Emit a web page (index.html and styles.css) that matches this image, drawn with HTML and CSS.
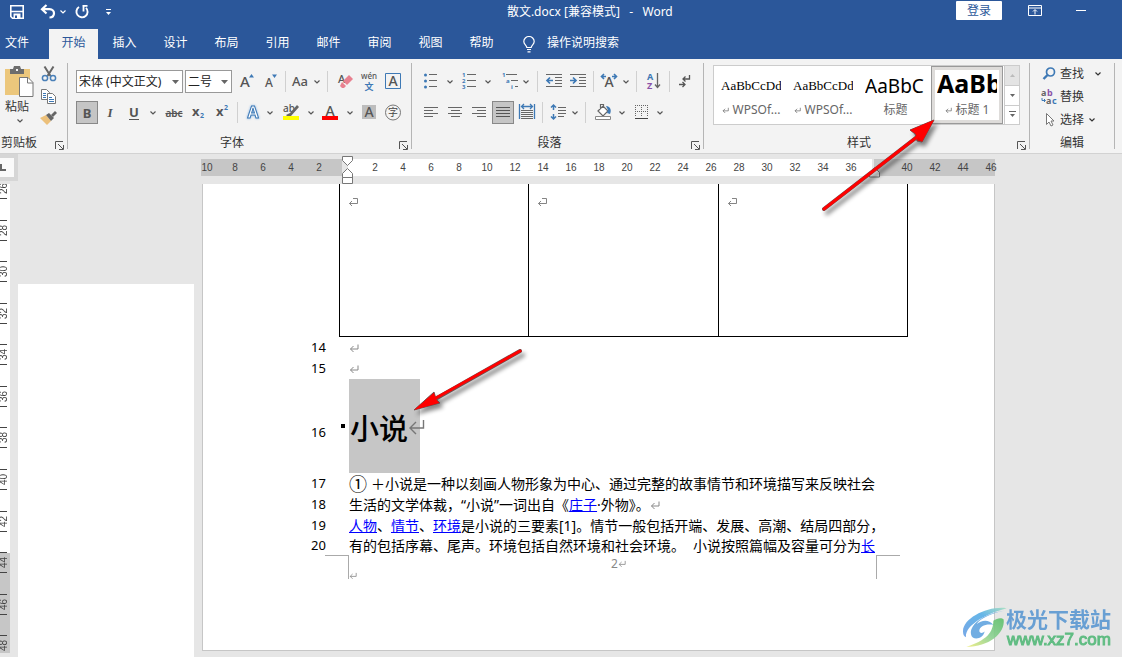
FILE: index.html
```html
<!DOCTYPE html>
<html lang="zh-CN">
<head>
<meta charset="utf-8">
<title>散文.docx [兼容模式] - Word</title>
<link rel="stylesheet" href="styles.css">
</head>
<body>
<svg class="defs" aria-hidden="true">
  <symbol id="caret" viewBox="0 0 8 6"><path d="M1.5 1.5 4 4 6.5 1.5" fill="none" stroke="currentColor" stroke-width="1.2"/></symbol>
  <symbol id="launch" viewBox="0 0 9 9"><path d="M.5 8V.5H8M3 3l5 5M8.500 4v4.500H4" fill="none" stroke="#555"/></symbol>
  <symbol id="tri" viewBox="0 0 7 4"><path d="M0 0h7L3.500 4z" fill="currentColor"/></symbol>
  <symbol id="ret" viewBox="0 0 10 9"><path d="M9 .5V5H1.500M4.500 2 1.500 5l3 3" fill="none" stroke="currentColor"/></symbol>
  <symbol id="cellret" viewBox="0 0 10 10"><path d="M5 1.500h4.500v5H1.500M4 4 1.500 6.500 4 9" fill="none" stroke="currentColor" stroke-width=".9"/></symbol>
</svg>
<div class="app">
  <header class="titlebar">
    <div class="quick">
      <button aria-label="保存"><svg width="16" height="16" viewBox="0 0 16 16"><path d="M1.800 1.800h12.400v12.400H3.500l-1.700-1.700z" fill="none" stroke="#fff" stroke-width="1.600"/><path d="M2 7.500h12" stroke="#fff" stroke-width="1.500"/><path d="M4.500 9.500h7V15h-7z" fill="#fff"/><path d="M6 11.500h2V14H6z" fill="#2b579a"/></svg></button>
      <button aria-label="撤消"><svg width="16" height="16" viewBox="0 0 16 16"><path d="M6.500 1 2 5.200 6.500 9.500M2.500 5.200h7c6 0 6 8 0 8.300" fill="none" stroke="#fff" stroke-width="2.200"/></svg></button>
      <button aria-label="撤消列表"><svg width="8" height="6"><use href="#caret"/></svg></button>
      <button aria-label="重复"><svg width="16" height="16" viewBox="0 0 16 16"><path d="M5 3A5.600 5.600 0 1 0 12 3.800" fill="none" stroke="#fff" stroke-width="1.900"/><path d="M8.500 1.800h5M9.500 1.500v6" fill="none" stroke="#fff" stroke-width="1.800"/></svg></button>
      <button aria-label="自定义快速访问工具栏"><svg width="7" height="8" viewBox="0 0 7 8"><path d="M1 1.500h5" stroke="#fff"/><path d="M1 4h5L3.500 7z" fill="#fff"/></svg></button>
    </div>
    <div class="doc-title">散文.docx [兼容模式]&nbsp;&nbsp; -&nbsp;&nbsp; Word</div>
    <div class="window-tools">
      <button class="login">登录</button>
      <button aria-label="功能区显示选项"><svg width="14" height="12" viewBox="0 0 14 12"><path d="M.5.500h13v10H.5zM.5 3h13M7 9.500V5M5 6.500l2-2 2 2" fill="none" stroke="#fff"/></svg></button>
      <button aria-label="最小化"><svg width="11" height="11" viewBox="0 0 11 11"><path d="M0 5.500h10" stroke="#fff"/></svg></button>
    </div>
  </header>
  <nav class="tabs">
    <button class="tab file">文件</button>
    <button class="tab active">开始</button>
    <button class="tab">插入</button>
    <button class="tab">设计</button>
    <button class="tab">布局</button>
    <button class="tab">引用</button>
    <button class="tab">邮件</button>
    <button class="tab">审阅</button>
    <button class="tab">视图</button>
    <button class="tab">帮助</button>
    <button class="tell"><svg width="12" height="17" viewBox="0 0 12 17"><path d="M3.800 11.500C3.800 9.500.8 8.500.8 5.500a5.100 4.900 0 0 1 10.400 0c0 3-3 4-3 6zM4 13.500h4M4.500 15.800h3" fill="none" stroke="#fff" stroke-width="1.200"/></svg>操作说明搜索</button>
  </nav>

  <section class="ribbon">
    <div class="group clipboard">
      <div class="clip-body">
        <button class="paste">
          <svg width="29" height="31" viewBox="0 0 29 31"><path d="M0 3h25v26H0z" fill="#ecc77c"/><path d="M5 3h3l1-3h6l1 3h3v5H5z" fill="#6d6d6d"/><path d="M11 3h2v2h-2z" fill="#f3f3f3"/><path d="M14.500 11.500h8.500l5 5v14H14.500z" fill="#fff" stroke="#777"/><path d="M22.500 11.500V17H28" fill="none" stroke="#777"/></svg>
          <span>粘贴</span>
          <svg width="8" height="6"><use href="#caret"/></svg>
        </button>
        <div class="clip-tools">
          <button aria-label="剪切"><svg width="16" height="16" viewBox="0 0 16 16"><path d="M3.500.5 9.500 10M12.500.500 6.500 10" stroke="#666" stroke-width="2"/><g fill="none" stroke="#4a80b8" stroke-width="1.500"><circle cx="4" cy="12" r="2.600"/><circle cx="12" cy="12" r="2.600"/></g></svg></button>
          <button aria-label="复制"><svg width="16" height="15" viewBox="0 0 16 15"><g fill="#fff" stroke="#777"><path d="M.5.500h5l3 3v7h-8z"/><path d="M6.500 4.500h5l3 3v7h-8z"/></g><path d="M2 4.500h3M2 6.500h3M2 8.500h3M8 8.500h3M8 10.500h5M8 12.500h5" stroke="#3e79b5"/></svg></button>
          <button aria-label="格式刷"><svg width="17" height="14" viewBox="0 0 17 14"><path d="M0 7 6 4l5 6-4 4z" fill="#ecc07a"/><path d="m6 4 3-2 5 5-3 3z" fill="#666"/><path d="m11 4 4-4 2 2-4 4z" fill="#666"/></svg></button>
        </div>
      </div>
      <div class="caption"><span>剪贴板</span><button aria-label="剪贴板设置"><svg width="9" height="9"><use href="#launch"/></svg></button></div>
    </div>

    <div class="group font">
      <div class="row font-one">
        <label class="combo"><select aria-label="字体"><option>宋体 (中文正文)</option></select><svg width="7" height="4"><use href="#tri"/></svg></label>
        <label class="combo"><select aria-label="字号"><option>二号</option></select><svg width="7" height="4"><use href="#tri"/></svg></label>
        <button aria-label="增大字号"><svg width="24" height="23" viewBox="0 0 24 23"><text x="6" y="17" class="g" font-size="15">A</text><path d="M15 7.500 17.500 4 20 7.500z" fill="#3e79b5"/></svg></button>
        <button aria-label="减小字号"><svg width="24" height="23" viewBox="0 0 24 23"><text x="7" y="17" class="g" font-size="12">A</text><path d="M14 4.500h5L16.500 8z" fill="#3e79b5"/></svg></button>
        <i class="sep"></i>
        <button aria-label="更改大小写"><svg width="24" height="23" viewBox="0 0 24 23"><text x="4" y="16" class="g" font-size="13">Aa</text></svg></button>
        <button aria-label="大小写选项"><svg width="8" height="6"><use href="#caret"/></svg></button>
        <i class="sep"></i>
        <button aria-label="清除格式"><svg width="24" height="23" viewBox="0 0 24 23"><text x="5" y="13" class="g" font-size="11">A</text><path d="m10 11 6-6 4 4-6 6z" fill="#e8808f"/><path d="m9 12 4 4-2 2H9l-2-2z" fill="#e8808f"/></svg></button>
        <button aria-label="拼音指南"><svg width="24" height="23" viewBox="0 0 24 23"><text x="12" y="9" text-anchor="middle" font-size="8" class="g">wén</text><text x="12" y="20" text-anchor="middle" font-size="9" class="b">文</text></svg></button>
        <button aria-label="字符边框"><svg width="24" height="23" viewBox="0 0 24 23"><path d="M4.500 3.500h15v15h-15z" fill="none" stroke="#3e79b5"/><text x="12" y="16" text-anchor="middle" font-size="14" class="g">A</text></svg></button>
      </div>
      <div class="row font-two">
        <button class="on" aria-label="加粗"><b>B</b></button>
        <button aria-label="倾斜"><b class="ital">I</b></button>
        <button aria-label="下划线"><b class="under">U</b></button>
        <button aria-label="下划线样式"><svg width="8" height="6"><use href="#caret"/></svg></button>
        <button aria-label="删除线"><s>abc</s></button>
        <button aria-label="下标"><svg width="22" height="23" viewBox="0 0 22 23"><text x="4" y="15" class="g h" font-size="13">x</text><text x="12" y="17" class="b" font-size="7">2</text></svg></button>
        <button aria-label="上标"><svg width="24" height="23" viewBox="0 0 24 23"><text x="6" y="15" class="g h" font-size="13">x</text><text x="14" y="9" class="b" font-size="7">2</text></svg></button>
        <i class="sep"></i>
        <button aria-label="文本效果"><svg width="24" height="23" viewBox="0 0 24 23"><text x="12" y="17" text-anchor="middle" font-size="16" font-weight="700" fill="#fff" stroke="#3e79b5" class="glow">A</text></svg></button>
        <button aria-label="效果选项"><svg width="8" height="6"><use href="#caret"/></svg></button>
        <button aria-label="突出显示"><svg width="28" height="23" viewBox="0 0 28 23"><text x="8" y="11" class="g" font-size="10">ab</text><path d="m22 4-7 8-4 2 1 1h4l8-9z" fill="#666"/><path d="M8 15h16v4H8z" fill="#ff0"/></svg></button>
        <button aria-label="突出显示颜色"><svg width="8" height="6"><use href="#caret"/></svg></button>
        <button aria-label="字体颜色"><svg width="24" height="23" viewBox="0 0 24 23"><text x="12" y="15" text-anchor="middle" class="g" font-size="14">A</text><path d="M4 15h16v4H4z" fill="red"/></svg></button>
        <button aria-label="颜色选项"><svg width="8" height="6"><use href="#caret"/></svg></button>
        <button aria-label="字符底纹"><svg width="24" height="23" viewBox="0 0 24 23"><path d="M5 4h14v14H5z" fill="#bdbdbd"/><text x="12" y="16" text-anchor="middle" class="g" font-size="14">A</text></svg></button>
        <button aria-label="带圈字符"><svg width="24" height="23" viewBox="0 0 24 23"><circle cx="12" cy="11.500" r="7.500" fill="none" stroke="#777"/><text x="12" y="15" text-anchor="middle" font-size="10" fill="#444">字</text></svg></button>
      </div>
      <div class="caption"><span>字体</span><button aria-label="字体设置"><svg width="9" height="9"><use href="#launch"/></svg></button></div>
    </div>

    <div class="group para">
      <div class="row para-one">
        <button aria-label="项目符号"><svg width="24" height="23" viewBox="0 0 24 23"><g fill="#3e79b5"><circle cx="6.500" cy="5" r="1.500"/><circle cx="6.500" cy="11" r="1.500"/><circle cx="6.500" cy="17" r="1.500"/></g><path d="M10 4.500h8M10 10.500h8M10 16.500h8" stroke="#666"/></svg></button>
        <button aria-label="符号选项"><svg width="8" height="6"><use href="#caret"/></svg></button>
        <button aria-label="编号"><svg width="24" height="23" viewBox="0 0 24 23"><g class="b" font-size="6"><text x="5" y="7">1</text><text x="5" y="13">2</text><text x="5" y="19">3</text></g><path d="M10 4.500h9M10 10.500h9M10 16.500h9" stroke="#666"/></svg></button>
        <button aria-label="编号选项"><svg width="8" height="6"><use href="#caret"/></svg></button>
        <button aria-label="多级列表"><svg width="24" height="23" viewBox="0 0 24 23"><g class="b" font-size="6"><text x="6" y="7">1</text><text x="10" y="13">a</text><text x="15" y="19">i</text></g><path d="M10 4.500h11M15 10.500h7M19 16.500h3" stroke="#666"/></svg></button>
        <button aria-label="列表选项"><svg width="8" height="6"><use href="#caret"/></svg></button>
        <i class="sep"></i>
        <button aria-label="减少缩进"><svg width="24" height="23" viewBox="0 0 24 23"><path d="M4 4.500h16M13 7.500h7M13 10.500h7M13 13.500h7M4 16.500h16" stroke="#666"/><path d="M11 10.500H5M8 7.500l-3 3 3 3" fill="none" stroke="#3e79b5" stroke-width="1.700"/></svg></button>
        <button aria-label="增加缩进"><svg width="24" height="23" viewBox="0 0 24 23"><path d="M4 4.500h16M13 7.500h7M13 10.500h7M13 13.500h7M4 16.500h16" stroke="#666"/><path d="M4 10.500h6M7 7.500l3 3-3 3" fill="none" stroke="#3e79b5" stroke-width="1.700"/></svg></button>
        <i class="sep"></i>
        <button aria-label="中文版式"><svg width="24" height="23" viewBox="0 0 24 23"><text x="12" y="17" text-anchor="middle" class="g" font-size="14">A</text><path d="M9 6.500H5M7 4 4.500 6.500 7 9M15 6.500h4M17 4l2.500 2.500L17 9" fill="none" stroke="#3e79b5" stroke-width="1.600"/></svg></button>
        <button aria-label="版式选项"><svg width="8" height="6"><use href="#caret"/></svg></button>
        <i class="sep"></i>
        <button aria-label="排序"><svg width="24" height="23" viewBox="0 0 24 23"><text x="5" y="10" class="b" font-size="9">A</text><text x="5" y="19" font-size="9" font-weight="700" fill="#8a52a8">Z</text><path d="M15.500 3v14M13 14.500l2.500 3 2.500-3" fill="none" stroke="#666" stroke-width="1.300"/></svg></button>
        <i class="sep"></i>
        <button aria-label="显示编辑标记"><svg width="24" height="23" viewBox="0 0 24 23"><path d="M16.500 5v4H10M12.500 6.500 10 9l2.500 2.500M6 14.500h6M9.500 12l2.500 2.500L9.500 17" fill="none" stroke="#555" stroke-width="1.300"/></svg></button>
      </div>
      <div class="row para-two">
        <button aria-label="左对齐"><svg width="24" height="23" viewBox="0 0 24 23"><path d="M5 6.500h14M5 9.500h9M5 12.500h14M5 15.500h9" stroke="#666"/></svg></button>
        <button aria-label="居中"><svg width="24" height="23" viewBox="0 0 24 23"><path d="M5 6.500h14M8 9.500h9M5 12.500h14M8 15.500h9" stroke="#666"/></svg></button>
        <button aria-label="右对齐"><svg width="24" height="23" viewBox="0 0 24 23"><path d="M5 6.500h14M10 9.500h9M5 12.500h14M10 15.500h9" stroke="#666"/></svg></button>
        <button class="on" aria-label="两端对齐"><svg width="20" height="21" viewBox="0 0 20 21"><path d="M3 5.500h14M3 8.500h14M3 11.500h14M3 14.500h14" stroke="#555"/></svg></button>
        <button aria-label="分散对齐"><svg width="24" height="23" viewBox="0 0 24 23"><path d="M4.500 3v15M19.500 3v15M7 5.500h10M9 3 6.500 5.500 9 8M15 3l2.500 2.500L15 8" fill="none" stroke="#3e79b5" stroke-width="1.300"/><path d="M6 9.500h12M6 11.500h12M6 13.500h12M6 15.500h12M6 17.500h12" stroke="#666"/></svg></button>
        <i class="sep"></i>
        <button aria-label="行距"><svg width="24" height="23" viewBox="0 0 24 23"><path d="M7.500 4v5M5 6.500 7.500 4 10 6.500M7.500 18v-5M5 15.500 7.500 18l2.500-2.500" fill="none" stroke="#3e79b5" stroke-width="1.500"/><path d="M12 6.500h8M12 9.500h8M12 12.500h8M12 15.500h6" stroke="#666"/></svg></button>
        <button aria-label="行距选项"><svg width="8" height="6"><use href="#caret"/></svg></button>
        <i class="sep"></i>
        <button aria-label="底纹"><svg width="24" height="23" viewBox="0 0 24 23"><path d="m7 10 5-5 5 5-5 5zM9.500 8V3.500h3V7" fill="#fff" stroke="#666" stroke-width="1.200"/><path d="M15 5c4 0 6 4 4 8l-3-1 1-3z" fill="#3e79b5"/><path d="M4.500 15.500h15v3h-15z" fill="#fff" stroke="#888"/></svg></button>
        <button aria-label="底纹选项"><svg width="8" height="6"><use href="#caret"/></svg></button>
        <button aria-label="边框"><svg width="24" height="23" viewBox="0 0 24 23"><path d="M6 4.500h13M6 10.500h13M6.500 4v12M12.500 4v12M18.500 4v12" stroke="#666" stroke-dasharray="1 1"/><path d="M6 17.500h13" stroke="#444"/></svg></button>
        <button aria-label="边框选项"><svg width="8" height="6"><use href="#caret"/></svg></button>
      </div>
      <div class="caption"><span>段落</span><button aria-label="段落设置"><svg width="9" height="9"><use href="#launch"/></svg></button></div>
    </div>

    <div class="group styles">
      <div class="gallery">
        <button class="style"><span class="sample">AaBbCcDd</span><span class="name"><svg width="7" height="7" viewBox="0 0 10 9"><use href="#ret"/></svg>WPSOf...</span></button>
        <button class="style"><span class="sample">AaBbCcDd</span><span class="name"><svg width="7" height="7" viewBox="0 0 10 9"><use href="#ret"/></svg>WPSOf...</span></button>
        <button class="style"><span class="sample title">AaBbC</span><span class="name">标题</span></button>
        <button class="style picked"><span class="sample heading">AaBb</span><span class="name"><svg width="7" height="7" viewBox="0 0 10 9"><use href="#ret"/></svg>标题 1</span></button>
        <div class="scroller">
          <button class="off" aria-label="向上"><svg class="up" width="5" height="3"><use href="#tri"/></svg></button>
          <button aria-label="向下"><svg width="5" height="3"><use href="#tri"/></svg></button>
          <button aria-label="其他"><svg width="7" height="7" viewBox="0 0 7 7"><path d="M0 .5h7" stroke="#666"/><path d="M1 3h5L3.500 6z" fill="#666"/></svg></button>
        </div>
      </div>
      <div class="caption"><span>样式</span><button aria-label="样式设置"><svg width="9" height="9"><use href="#launch"/></svg></button></div>
    </div>

    <div class="group edit">
      <div class="edit-body">
        <button><svg width="16" height="16" viewBox="0 0 16 16"><circle cx="9.500" cy="6" r="4" fill="none" stroke="#3e79b5" stroke-width="1.700"/><path d="m6.500 9-4 4" stroke="#3e79b5" stroke-width="2.400"/></svg>查找<svg class="more" width="8" height="6"><use href="#caret"/></svg></button>
        <button><svg width="16" height="18" viewBox="0 0 16 18"><g font-size="9" font-weight="700"><text x="0" y="8" fill="#666">a</text><text x="6" y="8" fill="#8a52a8">b</text><text x="5" y="16" fill="#666">a</text><text x="11" y="16" fill="#3e79b5">c</text></g><path d="M1 10v2.500h3M3 11l1.500 1.500L3 14" fill="none" stroke="#3e79b5"/></svg>替换</button>
        <button><svg width="16" height="16" viewBox="0 0 16 16"><path d="M5.500 1.500v11l2.500-2.500 2 4 2-1-2-4h3z" fill="#fff" stroke="#777"/></svg>选择<svg class="near" width="8" height="6"><use href="#caret"/></svg></button>
      </div>
      <div class="caption"><span>编辑</span></div>
    </div>
  </section>

  <main class="workspace">
    <aside class="rail">
      <div class="tabstop"><svg width="6" height="8" viewBox="0 0 6 8"><path d="M1 0v6h5" fill="none" stroke="#666" stroke-width="2"/></svg></div>
      <div class="vruler"><div class="vscale">
        <div><span>26</span></div><div><span>28</span></div><div><span>30</span></div><div><span>32</span></div><div><span>34</span></div><div><span>36</span></div><div><span>38</span></div><div><span>40</span></div><div><span>42</span></div><div><span>44</span></div><div><span>46</span></div><div><span>48</span></div>
      </div></div>
    </aside>
    <div class="prev-page"></div>
    <div class="sheet-col">
      <div class="hruler">
        <div class="hscale"><span>10</span><span>8</span><span>6</span><span>4</span><span>2</span><span></span><span>2</span><span>4</span><span>6</span><span>8</span><span>10</span><span>12</span><span>14</span><span>16</span><span>18</span><span>20</span><span>22</span><span>24</span><span>26</span><span>28</span><span>30</span><span>32</span><span>34</span><span>36</span><span></span><span>40</span><span>42</span><span>44</span><span>46</span></div>
        <svg class="indent-left" width="12" height="29" viewBox="0 0 12 29"><path d="M.5.500h10v4l-5 5-5-5zM.500 21.500v-4l5-5 5 5v10H.500zM.500 21.500h10" fill="#fff" stroke="#777"/></svg>
        <svg class="indent-right" width="12" height="11" viewBox="0 0 12 11"><path d="M.5 10V5.500l5-5 5 5V10z" fill="#f3f3f3" stroke="#777"/></svg>
      </div>
      <article class="sheet">
        <table class="doc-table"><tbody><tr>
          <td><svg width="10" height="10"><use href="#cellret"/></svg></td>
          <td><svg width="10" height="10"><use href="#cellret"/></svg></td>
          <td><svg width="10" height="10"><use href="#cellret"/></svg></td>
        </tr></tbody></table>
        <div class="line"><span class="num">14</span><p><svg class="mark" width="10" height="9"><use href="#ret"/></svg></p></div>
        <div class="line"><span class="num">15</span><p><svg class="mark" width="10" height="9"><use href="#ret"/></svg></p></div>
        <div class="line title-line"><span class="num">16</span><h1><span>小说</span><svg width="18" height="18" viewBox="0 0 18 18"><path d="M15.500 2v8H2M8 4l-6 6 6 6" fill="none" stroke="#777" stroke-width="1.400"/></svg></h1></div>
        <div class="line"><span class="num">17</span><p><span class="circled">①</span>＋小说是一种以刻画人物形象为中心、通过完整的故事情节和环境描写来反映社会</p></div>
        <div class="line"><span class="num">18</span><p>生活的文学体裁，<span class="latin">“</span>小说<span class="latin">”</span>一词出自《<a href="#zhuangzi">庄子</a><span class="latin">·</span>外物》。<svg class="mark" width="10" height="9"><use href="#ret"/></svg></p></div>
        <div class="line"><span class="num">19</span><p><a href="#people">人物</a>、<a href="#plot">情节</a>、<a href="#setting">环境</a>是小说的三要素<span class="latin">[1]</span>。情节一般包括开端、发展、高潮、结局四部分，</p></div>
        <div class="line last"><span class="num">20</span><p>有的包括序幕、尾声。环境包括自然环境和社会环境。<span class="gap"> </span>小说按照篇幅及容量可分为<a href="#long">长</a></p></div>
        <footer class="sheet-foot">
          <i class="corner left"></i>
          <svg class="foot-mark" width="8" height="8" viewBox="0 0 10 9"><use href="#ret"/></svg>
          <div class="page-no">2<svg width="8" height="8" viewBox="0 0 10 9"><use href="#ret"/></svg></div>
          <i class="corner right"></i>
        </footer>
      </article>
    </div>
  </main>

  <svg class="arrow to-style" width="126" height="106" viewBox="0 0 126 106"><path d="M5 95 98 23" stroke="#655" stroke-width="4" stroke-linecap="round"/><path d="m115 6-24 10 5 4 2 7 5 1z" fill="#e00" stroke="#655"/><path d="M5 95 98 23" stroke="#f00" stroke-width="3" stroke-linecap="round"/><path d="m115 6-24 10 6 4 6 8z" fill="#f00"/></svg>
  <svg class="arrow to-title" width="126" height="80" viewBox="0 0 126 80"><path d="M110 7 27 54" stroke="#655" stroke-width="4" stroke-linecap="round"/><path d="m4 66 20-18 2 7 4 4z" fill="#e00" stroke="#655"/><path d="M110 7 26 54" stroke="#f00" stroke-width="3" stroke-linecap="round"/><path d="m4 66 20-17 2 6 3 4z" fill="#f00"/></svg>

  <div class="watermark">
    <svg width="46" height="43" viewBox="0 0 138 128">
      <defs>
        <linearGradient id="sky" x1="0" y1="1" x2="1" y2="0"><stop offset="0" stop-color="#6a9fe4"/><stop offset=".6" stop-color="#55aee6"/><stop offset="1" stop-color="#a5e0c0"/></linearGradient>
        <linearGradient id="leaf" x1="0" y1="1" x2="1" y2="0"><stop offset="0" stop-color="#f0ee80"/><stop offset=".5" stop-color="#8ad090"/><stop offset="1" stop-color="#5bbf6a"/></linearGradient>
      </defs>
      <path d="M134 6C80-2 3 35 3 75c0 9 2 14 9 18C8 60 66 24 134 6z" fill="url(#sky)"/>
      <path d="M94 44c12-10 26-10 31-4 5 42-45 82-112 82 26-8 50-20 64-34 12-12 17-28 17-44z" fill="url(#leaf)"/>
      <path d="M126 14C74 20 22 52 27 84c3 20 36 16 41-8-6 6-16 6-16-2 0-14 20-22 42-18C80 38 58 42 44 54c10-16 42-32 82-40z" fill="#62a5df"/>
    </svg>
    <div><strong>极光下载站</strong><span>www.xz7.com</span></div>
  </div>
</div>
</body>
</html>
```
FILE: styles.css
```css
* { box-sizing: border-box; }
body {
  margin: 0;
  font: 12px/18px "Noto Sans", "Noto Sans CJK SC", sans-serif;
  color: #333;
  background: #e6e6e6;
}
button {
  display: flex; align-items: center; justify-content: center;
  margin: 0; padding: 0; border: 0;
  background: none; color: inherit; font: inherit; white-space: nowrap;
}
svg { display: block; flex: none; }
.defs { position: absolute; width: 0; height: 0; }
.app { position: relative; display: flex; flex-direction: column; height: 100vh; overflow: hidden; }

/* title bar */
.titlebar {
  display: grid; grid-template-columns: 45% auto 1fr; align-items: start;
  height: 29px; padding-top: 1px; background: #2b579a; color: #fff;
}
.quick { display: grid; grid-template-columns: 28px 20px 14px 30px 26px; padding-left: 3px; height: 21px; }
.quick button:nth-child(2) { margin: 0 -8px 0 6px; }
.quick button:nth-child(3) { margin: 0 -2px 0 8px; }
.quick button:nth-child(4) { margin-left: 4px; }
.doc-title { padding: 2px 0 0 2px; white-space: nowrap; }
.window-tools { display: flex; justify-content: flex-end; gap: 26px; padding-right: 35px; height: 19px; }
.window-tools button:nth-child(2) { margin-right: 8px; }
.login { width: 46px; height: 19px; border-radius: 1px; background: #fff; color: #2b579a; }

/* tabs */
.tabs { display: flex; height: 30px; background: #2b579a; color: #fff; }
.tab { width: 51px; height: 30px; padding-bottom: 2px; }
.file { width: 49px; padding-left: 5px; justify-content: flex-start; }
.active { width: 49px; margin-right: 1px; background: #f3f3f3; color: #2b579a; }
.tell { gap: 12px; margin-left: 16px; padding-bottom: 2px; }
.tell svg { margin-top: 2px; }

/* ribbon */
.ribbon { display: flex; height: 95px; padding: 4px 0; background: #f3f3f3; border-bottom: 1px solid #d2d2d2; color: #555; }
.group { display: flex; flex-direction: column; padding-top: 7px; border-right: 1px solid #b5b5b5; }
.row { display: grid; height: 23px; margin-bottom: 8px; }
.row button { height: 23px; }
.row button.on { border: 1px solid #888; background: #c5c5c5; width: 22px; justify-self: center; }
.sep { width: 1px; height: 21px; margin: auto; background: #d0d0d0; }
.g { fill: #555; font-weight: 500; }
.h { font-weight: 700; }
.b { fill: #3e79b5; font-weight: 700; }
.glow { filter: drop-shadow(0 0 1px #8ab8e8); }
.caption { display: flex; align-items: center; margin: auto 0 -3px; color: #333; }
.caption span { flex: 1; text-align: center; }
.caption button { width: 15px; height: 9px; margin-top: 4px; }

.clipboard { width: 68px; padding-top: 0; }
.clip-body { display: flex; gap: 6px; padding: 3px 0 0 5px; }
.paste { flex-direction: column; justify-content: flex-start; width: 29px; }
.paste span { align-self: flex-start; margin-top: 2px; line-height: 16px; color: #333; }
.paste svg:last-child { margin: 3px 0 0; }
.clip-tools { display: flex; flex-direction: column; gap: 7px; }
.clipboard .caption span { text-align: left; padding-left: 1px; }

.font { width: 344px; padding-left: 8px; }
.font-one { grid-template-columns: 107px 2px 47px 2px 24px 24px 6px 24px 10px 11px 24px 24px 24px; }
.font-one .combo:first-child { grid-column: 1; }
.font-one .combo:nth-child(2) { grid-column: 3; }
.font-one button:nth-child(3) { grid-column: 5; }
.combo { position: relative; display: block; height: 23px; }
.combo select {
  appearance: none; width: 100%; height: 23px; padding: 0 0 0 2px;
  border: 1px solid #999; border-radius: 0; background: #fff; color: #222; font: inherit;
}
.combo svg { position: absolute; right: 4px; top: 10px; color: #666; }
.font-two { grid-template-columns: 22px 24px 24px 14px 28px 22px 24px 7px 24px 10px 28px 15px 24px 15px 24px 24px; margin-bottom: 0; }
.font-two b { font-size: 13px; }
.ital { font-style: italic; font-family: "Liberation Serif", serif; }
.under { border-bottom: 1px solid #555; line-height: 13px; }
.font-two s { font-size: 10px; font-weight: 600; }
.font .caption, .para .caption { margin-left: -8px; }
.styles .caption { margin-left: -9px; }

.para { width: 292px; padding-left: 7px; }
.para-one { grid-template-columns: 24px 14px 24px 14px 25px 12px 10px 24px 24px 7px 24px 10px 11px 24px 7px 24px; }
.para-two { grid-template-columns: 24px 24px 24px 24px 24px 7px 24px 10px 11px 24px 14px 24px 14px; margin-bottom: 0; }

.styles { width: 326px; padding: 2px 0 0 9px; }
.gallery { display: grid; grid-template-columns: 72px 72px 73px 72px 1fr; width: 307px; height: 60px; border: 1px solid #ccc; background: #fff; }
.style { flex-direction: column; justify-content: flex-start; padding: 0 5px 0 7px; height: 58px; overflow: hidden; color: #666; }
.sample {
  display: flex; align-items: center; align-self: stretch; height: 36px; padding-top: 4px; overflow: hidden;
  color: #000; font: 13px/30px "Liberation Serif", serif;
}
.sample.title { font: 19px/30px "Noto Sans", sans-serif; }
.sample.heading { height: 32px; padding: 0; font: bold 25px/26px "Noto Sans", sans-serif; align-items: flex-start; }
.name { display: flex; align-items: center; gap: 4px; line-height: 16px; }
.picked { padding: 3px 5px 0; border: 1px solid #999; box-shadow: inset 0 0 0 3px #dedcda; }
.scroller { display: grid; grid-template-rows: 1fr 1fr 1fr; margin-left: 1px; border-left: 1px solid #ccc; color: #666; }
.scroller button + button { border-top: 1px solid #ccc; }
.scroller .off { background: #e4e4e4; color: #bbb; }
.up { rotate: 180deg; }

.edit { width: 85px; padding: 0; }
.edit-body { display: flex; flex-direction: column; align-items: flex-start; gap: 5px; padding: 2px 0 0 11px; color: #333; }
.edit-body button { height: 18px; gap: 3px; }
.more { margin-left: 7px; }
.near { margin-left: 1px; }

/* workspace */
.workspace { flex: 1; min-height: 0; display: grid; grid-template-columns: 18px minmax(0, 176px) minmax(0, 801px) 1fr; }
.rail { display: flex; flex-direction: column; min-height: 0; padding-bottom: 4px; }
.tabstop { display: flex; align-items: center; height: 27px; margin-bottom: 3px; border: 4px solid #d6d6d6; border-left: 0; background: #fafafa; }
.vruler {
  flex: 1; min-height: 0; width: 10px; overflow: hidden;
  background: linear-gradient(#fff 369px, #c6c6c6 369px);
}
.vscale { display: grid; grid-template-rows: repeat(12, 1fr); height: 499px; margin-top: -6px; }
.vscale div { min-height: 0; }
.vscale span {
  display: block; width: 7px; height: 21px; text-align: center;
  writing-mode: vertical-rl; rotate: 180deg; border: solid #444; border-width: 1px 0;
  font: 10px/7px "Liberation Sans", sans-serif; color: #444;
}
.prev-page { margin-top: 130px; background: #fff; }
.sheet-col { display: flex; flex-direction: column; padding-left: 7px; min-height: 0; }
.hruler {
  position: relative; height: 17px; margin: 5px 0 8px; overflow: visible;
  background: linear-gradient(90deg, #c6c6c6 141px, #e6e6e6 141px 147px, #fff 147px 671px, #e6e6e6 671px 673px, #c6c6c6 673px);
}
.hscale { display: grid; grid-template-columns: repeat(29, 28px); margin-left: -8px; text-align: center; font: 10px/17px "Liberation Sans", sans-serif; color: #444; }
.indent-left { position: absolute; left: 141px; top: -3px; }
.indent-right { position: absolute; left: 668px; top: 8px; }
.sheet { flex: 1; margin: 0 0 6px 1px; padding-left: 108px; background: #fff; border: solid #c6c6c6; border-width: 0 1px 1px; color: #000; }
.doc-table { width: 569px; height: 153px; margin-left: 28px; border-collapse: collapse; }
.doc-table td { width: 33%; padding: 13px 0 0 8px; vertical-align: top; border: 1px solid #000; border-top: 0; color: #777; }
.line { display: grid; grid-template-columns: 38px 1fr; align-items: center; min-height: 21px; }
.line p { margin: 0; font: 14px/21px "Noto Sans CJK SC", sans-serif; white-space: nowrap; }
.last { min-height: 19px; }
.line.last p { line-height: 19px; }
.num { font: 13px/19px "Noto Sans", sans-serif; }
.mark { display: inline-block; color: #888; }
.title-line { min-height: 94px; }
.title-line .num { padding-top: 12px; }
h1 { position: relative; display: flex; align-items: center; width: 71px; height: 94px; margin: 0; background: #c6c6c6; padding: 2px 0 0 1px; }
h1::before { content: ""; position: absolute; left: -8px; top: 45px; width: 4px; height: 4px; background: #000; }
h1 span { flex: none; font: 500 29px/40px "Noto Sans CJK SC", sans-serif; white-space: nowrap; }
.circled { display: inline-block; width: 22px; font-size: 18px; line-height: 20px; vertical-align: -2px; }
.latin { font-family: "Noto Sans", sans-serif; }
.gap { display: inline-block; width: 8px; }
.line a { color: #00f; text-decoration: underline; }
.sheet-foot { display: grid; grid-template-columns: 24px 12px 1fr 24px; width: 575px; margin-left: 14px; height: 25px; color: #888; }
.corner { height: 24px; border-top: 1px solid #aaa; }
.corner.left { border-right: 1px solid #aaa; }
.corner.right { border-left: 1px solid #aaa; }
.foot-mark { align-self: end; }
.page-no { display: flex; align-items: center; justify-content: center; height: 18px; }

/* annotations */
.arrow { position: absolute; fill: none; filter: drop-shadow(3px 4px 2px #0007); }
.to-style { left: 819px; top: 114px; }
.to-title { left: 410px; top: 344px; }
.watermark { position: absolute; right: 11px; bottom: 7px; display: flex; opacity: .9; }
.watermark div { display: flex; flex-direction: column; margin-left: -2px; }
.watermark strong { font: bold 21px/24px "Noto Sans CJK SC", sans-serif; color: #5b98d2; }
.watermark span { padding-left: 1px; font: 17px/20px "Liberation Sans", sans-serif; color: #52b878; -webkit-text-stroke: 1px #52b878; }
```
